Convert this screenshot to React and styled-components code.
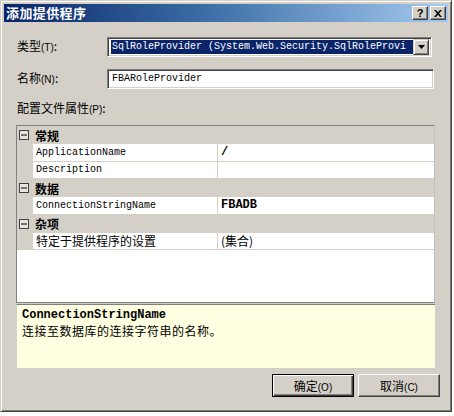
import React from "react";
import styled, { createGlobalStyle } from "styled-components";

const Global = createGlobalStyle`
  html, body { margin: 0; padding: 0; background: #ffffff; }
  body { font-family: "Noto Sans CJK SC", "Liberation Sans", sans-serif; font-size: 12px; color: #000; }
`;

const CJK = `"Noto Sans CJK SC", "Liberation Sans", sans-serif`;
const MONO = `"Liberation Mono", "Noto Sans CJK SC", monospace`;

const Window = styled.div`
  width: 452px;
  height: 412px;
  box-sizing: border-box;
  background: #d4d0c8;
  border: 1px solid;
  border-color: #d4d0c8 #404040 #404040 #d4d0c8;
  box-shadow: inset 1px 1px 0 #ffffff, inset -1px -1px 0 #808080;
  padding: 3px;
  display: flex;
  flex-direction: column;
`;

const TitleBar = styled.div`
  height: 18px;
  flex: none;
  display: flex;
  align-items: center;
  padding: 0 2px 0 2px;
  background: linear-gradient(to right, #0a246a, #3a6ea5 45%, #a6caf0);
`;

const Title = styled.span`
  color: #ffffff;
  font-family: ${CJK};
  font-weight: bold;
  font-size: 13px;
  line-height: 18px;
  letter-spacing: 0.4px;
`;

const TitleButtons = styled.div`
  margin-left: auto;
  display: flex;
  gap: 2px;
`;

const CaptionButton = styled.div`
  width: 16px;
  height: 14px;
  box-sizing: border-box;
  background: #d4d0c8;
  border: 1px solid;
  border-color: #ffffff #404040 #404040 #ffffff;
  box-shadow: inset -1px -1px 0 #808080;
  display: flex;
  align-items: center;
  justify-content: center;
  font-family: "Liberation Sans", sans-serif;
  font-weight: bold;
  font-size: 11px;
  line-height: 12px;
`;

const Body = styled.div`
  flex: 1;
  display: flex;
  flex-direction: column;
  padding: 15px 13px 0 12px;
`;

const FormGrid = styled.div`
  display: grid;
  grid-template-columns: 91px 1fr;
  row-gap: 12px;
  align-items: center;
`;

const Label = styled.label`
  font-family: ${CJK};
  font-size: 12px;
  line-height: 16px;
  padding-left: 1px;
  color: #000;
`;

const Hot = styled.span`
  font-family: "Liberation Sans", sans-serif;
  font-size: 10px;
`;

const Sunken = styled.div`
  height: 20px;
  box-sizing: border-box;
  border: 1px solid;
  border-color: #808080 #ffffff #ffffff #808080;
  box-shadow: inset 1px 1px 0 #404040, inset -1px -1px 0 #d4d0c8;
  background: #ffffff;
  display: flex;
  align-items: center;
  padding: 2px;
  margin-right: ${(p) => p.$inset}px;
  min-width: 0;
`;

const Selected = styled.div`
  flex: 1;
  min-width: 0;
  height: 14px;
  margin-left: 1px;
  background: #0a246a;
  color: #ffffff;
  font-family: ${MONO};
  font-size: 10px;
  line-height: 14px;
  white-space: pre;
  padding-left: 1px;
`;

const FieldText = styled.div`
  font-family: ${MONO};
  font-size: 10px;
  line-height: 14px;
  padding-left: 2px;
  white-space: pre;
`;

const DropButton = styled.div`
  width: 16px;
  height: 16px;
  flex: none;
  box-sizing: border-box;
  background: #d4d0c8;
  border: 1px solid;
  border-color: #d4d0c8 #404040 #404040 #d4d0c8;
  box-shadow: inset 1px 1px 0 #ffffff, inset -1px -1px 0 #808080;
  display: flex;
  align-items: center;
  justify-content: center;
`;

const SectionLabel = styled(Label)`
  display: block;
  margin: 10px 0 7px;
  line-height: 17px;
`;

const PropGrid = styled.div`
  height: 178px;
  box-sizing: border-box;
  border: 1px solid;
  border-color: #808080 #c0c0c0 #808080 #808080;
  background: #ffffff;
  display: flex;
  flex-direction: column;
`;

const CategoryRow = styled.div`
  height: 18px;
  flex: none;
  background: #d4d0c8;
  display: flex;
  align-items: center;
  gap: 6px;
  padding-left: 2px;
  font-family: ${CJK};
  font-weight: bold;
  font-size: 12px;
`;

const PropRow = styled.div`
  height: 17.5px;
  flex: none;
  box-sizing: border-box;
  display: grid;
  grid-template-columns: 16px 184px 1px 1fr;
  border-bottom: 1px solid #d4d0c8;
`;

const Margin = styled.div`
  background: #d4d0c8;
`;

const Divider = styled.div`
  background: #d4d0c8;
`;

const NameCell = styled.div`
  padding-left: 3px;
  display: flex;
  align-items: center;
  font-family: ${(p) => (p.$cjk ? CJK : MONO)};
  font-size: ${(p) => (p.$cjk ? 12 : 10)}px;
  white-space: pre;
  overflow: hidden;
`;

const ValueCell = styled.div`
  padding-left: 3px;
  display: flex;
  align-items: center;
  font-family: ${(p) => (p.$cjk ? CJK : MONO)};
  font-size: 12px;
  font-weight: ${(p) => (p.$bold ? "bold" : "normal")};
  white-space: pre;
  overflow: hidden;
`;

const DescPanel = styled.div`
  margin-top: 1px;
  height: 64px;
  box-sizing: border-box;
  border-top: 1px solid #808080;
  border-left: 1px solid #d4d0c8;
  background: #ffffe1;
  padding: 3px 5px;
`;

const DescTitle = styled.div`
  font-family: ${MONO};
  font-weight: bold;
  font-size: 12px;
  line-height: 15px;
`;

const DescText = styled.div`
  font-family: ${CJK};
  font-size: 12px;
  line-height: 16px;
  letter-spacing: 0.5px;
`;

const ButtonRow = styled.div`
  display: flex;
  justify-content: flex-end;
  gap: 4px;
  margin: 6px -5px 0 0;
`;

const Button = styled.button`
  width: 82px;
  height: 23px;
  box-sizing: border-box;
  background: #d4d0c8;
  font-family: ${CJK};
  font-size: 12px;
  color: #000;
  padding: 0;
  border: 1px solid;
  border-color: ${(p) => (p.$default ? "#000000" : "#ffffff #404040 #404040 #ffffff")};
  box-shadow: ${(p) =>
    p.$default
      ? "inset 1px 1px 0 #ffffff, inset -1px -1px 0 #404040, inset -2px -2px 0 #808080"
      : "inset -1px -1px 0 #808080"};
`;

const MinusBox = () => (
  <svg width="10" height="10" viewBox="0 0 10 10">
    <rect x="0.5" y="0.5" width="9" height="9" fill="#e8e6e1" stroke="#404040" />
    <rect x="2" y="4.5" width="6" height="1" fill="#000" />
  </svg>
);

const Arrow = () => (
  <svg width="7" height="4" viewBox="0 0 7 4">
    <path d="M0 0h7L3.5 4z" fill="#000" />
  </svg>
);

const CloseGlyph = () => (
  <svg width="8" height="7" viewBox="0 0 8 7">
    <path d="M0 0h2l2 2.3L6 0h2L5 3.5 8 7H6L4 4.7 2 7H0l3-3.5z" fill="#000" />
  </svg>
);

const groups = [
  {
    name: "常规",
    props: [
      { name: "ApplicationName", value: "/", bold: true },
      { name: "Description", value: "" },
    ],
  },
  {
    name: "数据",
    props: [{ name: "ConnectionStringName", value: "FBADB", bold: true }],
  },
  {
    name: "杂项",
    props: [{ name: "特定于提供程序的设置", value: "(集合)", cjk: true }],
  },
];

export default function App() {
  return (
    <>
      <Global />
      <Window>
        <TitleBar>
          <Title>添加提供程序</Title>
          <TitleButtons>
            <CaptionButton>?</CaptionButton>
            <CaptionButton>
              <CloseGlyph />
            </CaptionButton>
          </TitleButtons>
        </TitleBar>
        <Body>
          <FormGrid>
            <Label>
              类型<Hot>(T)</Hot>:
            </Label>
            <Sunken $inset={3}>
              <Selected>SqlRoleProvider (System.Web.Security.SqlRoleProvi</Selected>
              <DropButton>
                <Arrow />
              </DropButton>
            </Sunken>
            <Label>
              名称<Hot>(N)</Hot>:
            </Label>
            <Sunken $inset={1}>
              <FieldText>FBARoleProvider</FieldText>
            </Sunken>
          </FormGrid>
          <SectionLabel>
            配置文件属性<Hot>(P)</Hot>:
          </SectionLabel>
          <PropGrid>
            {groups.map((g) => (
              <React.Fragment key={g.name}>
                <CategoryRow>
                  <MinusBox />
                  {g.name}
                </CategoryRow>
                {g.props.map((p) => (
                  <PropRow key={p.name}>
                    <Margin />
                    <NameCell $cjk={p.cjk}>{p.name}</NameCell>
                    <Divider />
                    <ValueCell $bold={p.bold} $cjk={p.cjk}>
                      {p.value}
                    </ValueCell>
                  </PropRow>
                ))}
              </React.Fragment>
            ))}
          </PropGrid>
          <DescPanel>
            <DescTitle>ConnectionStringName</DescTitle>
            <DescText>连接至数据库的连接字符串的名称。</DescText>
          </DescPanel>
          <ButtonRow>
            <Button $default>
              确定<Hot>(O)</Hot>
            </Button>
            <Button>
              取消<Hot>(C)</Hot>
            </Button>
          </ButtonRow>
        </Body>
      </Window>
    </>
  );
}
